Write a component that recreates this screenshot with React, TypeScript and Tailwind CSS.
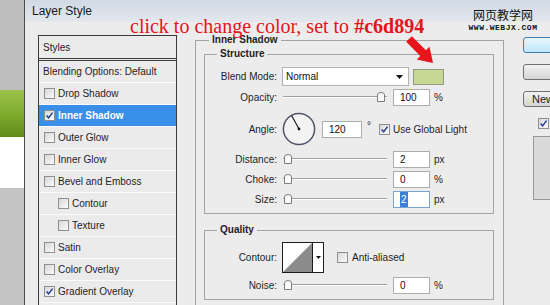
import clsx from 'clsx'

interface StyleRow {
  label: string
  checked?: boolean
  selected?: boolean
  indent?: boolean
}

const styleRows: StyleRow[] = [
  { label: 'Drop Shadow' },
  { label: 'Inner Shadow', checked: true, selected: true },
  { label: 'Outer Glow' },
  { label: 'Inner Glow' },
  { label: 'Bevel and Emboss' },
  { label: 'Contour', indent: true },
  { label: 'Texture', indent: true },
  { label: 'Satin' },
  { label: 'Color Overlay' },
  { label: 'Gradient Overlay', checked: true },
]

function CheckBox({ checked, className }: { checked?: boolean; className?: string }) {
  return (
    <span
      className={clsx(
        'flex h-[11px] w-[11px] shrink-0 items-center justify-center border border-[#8e8f8f] bg-gradient-to-br from-[#d8d8d8] to-[#fbfbfb]',
        className
      )}
    >
      {checked && (
        <svg viewBox="0 0 10 10" className="h-[9px] w-[9px]">
          <path d="M1.8 5 L4 7.6 L8.4 1.8" fill="none" stroke="#2a3c9c" strokeWidth="1.7" />
        </svg>
      )}
    </span>
  )
}

function Slider({ at }: { at: 'start' | 'end' }) {
  return (
    <div className="relative ml-[6px] flex h-full w-[104px] items-center">
      <div className="h-[2px] w-full border-t border-[#a0a0a0] bg-white" />
      {/* thumb */}
      <svg
        viewBox="0 0 8 10"
        className={clsx(
          'absolute top-1/2 h-[10px] w-[8px] -translate-y-1/2',
          at === 'start' ? 'left-[1px]' : 'right-[2px]'
        )}
      >
        <path d="M0.5 3 Q0.5 0.5 4 0.5 Q7.5 0.5 7.5 3 V9.5 H0.5 Z" fill="#fafafa" stroke="#7d7d7d" />
      </svg>
    </div>
  )
}

function Field({ value, selected, className }: { value: string; selected?: boolean; className?: string }) {
  return (
    <div
      className={clsx(
        'flex h-[17px] items-center border bg-white pl-[6px] text-[#111]',
        selected ? 'border-[#7ba2d0]' : 'border-[#abadb3]',
        className
      )}
    >
      <span className={clsx(selected && 'bg-[#3a7fd8] px-px text-white')}>{value}</span>
    </div>
  )
}

function Label({ text }: { text: string }) {
  return <div className="w-[72px] shrink-0 text-right">{text}</div>
}

function SliderRow({ label, value, unit, at, selected, className }: {
  label: string
  value: string
  unit: string
  at: 'start' | 'end'
  selected?: boolean
  className?: string
}) {
  return (
    <div className={clsx('flex h-[18px] items-center', className)}>
      <Label text={label} />
      <Slider at={at} />
      <Field value={value} selected={selected} className="ml-[6px] w-[37px]" />
      <span className="ml-[4px]">{unit}</span>
    </div>
  )
}

export default function App() {
  return (
    <div className="relative flex h-[305px] w-[550px] overflow-hidden bg-[#c2c2c2] font-['Liberation_Sans',Arial,sans-serif] text-[10px] text-[#1e1e1e]">
      {/* page behind the dialog */}
      <div className="flex w-[24px] shrink-0 flex-col">
        <div className="h-[90px] bg-[#bdbdbd]" />
        <div className="h-[47px] bg-gradient-to-b from-[#9cc34a] via-[#7eac2d] to-[#5f8d19]" />
        <div className="h-[51px] bg-white" />
        <div className="flex-1 bg-[#c5c5c5]" />
      </div>

      {/* dialog */}
      <div className="flex min-w-0 flex-1 flex-col border-l border-[#4b4b4b] bg-[#ececec]">
        <div className="flex h-[22px] shrink-0 items-center bg-gradient-to-b from-[#d0d9e5] to-[#e4e8ed] pl-[7px] text-[12px] text-[#1a1a1a]">
          Layer Style
        </div>

        <div className="flex flex-1">
          {/* Styles list */}
          <div className="ml-[13px] mt-[13px] flex w-[139px] shrink-0 flex-col border-x border-t border-[#3a3a3a] bg-[#ebebeb]">
            <div className="flex h-[22px] items-center pl-[4px]">Styles</div>
            <div className="border-t-[3px] border-double border-[#3a3a3a]" />
            <div className="flex h-[22px] items-center border-b border-[#fbfbfb] pl-[4px]">Blending Options: Default</div>
            {styleRows.map((row) => (
              <div
                key={row.label}
                className={clsx(
                  'flex h-[22px] shrink-0 items-center gap-[3px] border-b border-[#fbfbfb]',
                  row.indent ? 'pl-[19px]' : 'pl-[5px]',
                  row.selected && 'bg-[#3a8fe8] font-bold text-white'
                )}
              >
                <CheckBox checked={row.checked} />
                <span>{row.label}</span>
              </div>
            ))}
          </div>

          {/* Inner Shadow options */}
          <fieldset className="ml-[18px] mt-[11px] w-[309px] shrink-0 border border-[#a4a4a4] pb-[6px] pl-[8px] pr-[9px]">
            <legend className="ml-[5px] px-[3px] text-[10px] font-bold leading-[14px]">Inner Shadow</legend>

            <fieldset className="border border-[#a4a4a4] pb-[5px] pt-[6px]">
              <legend className="ml-[12px] px-[3px] font-bold leading-[14px]">Structure</legend>

              <div className="flex h-[19px] items-center">
                <Label text="Blend Mode:" />
                <div className="ml-[5px] flex h-[19px] w-[127px] items-center justify-between border border-[#b3b3b3] bg-white pl-[3px] pr-[5px] text-[#111]">
                  <span>Normal</span>
                  <svg viewBox="0 0 7 4" className="h-[4px] w-[7px]">
                    <path d="M0 0 H7 L3.5 4 Z" fill="#111" />
                  </svg>
                </div>
                <div className="ml-[4px] h-[16px] w-[31px] border border-[#8f9a80] bg-[#c6d894]" />
              </div>

              <SliderRow label="Opacity:" value="100" unit="%" at="end" className="mt-[2px]" />

              <div className="mt-[6px] flex h-[34px] items-center">
                <Label text="Angle:" />
                <svg viewBox="0 0 34 34" className="ml-[5px] h-[34px] w-[34px]">
                  <circle cx="17" cy="17" r="15.6" fill="#f3f3f3" stroke="#4f546a" strokeWidth="1.5" />
                  <line x1="17" y1="17" x2="9.6" y2="3.6" stroke="#111" strokeWidth="1.1" />
                  <circle cx="17" cy="17" r="1.4" fill="#111" />
                </svg>
                <Field value="120" className="ml-[6px] w-[40px]" />
                <span className="ml-[5px] -mt-[8px]">°</span>
                <CheckBox checked className="ml-[8px]" />
                <span className="ml-[3px]">Use Global Light</span>
              </div>

              <SliderRow label="Distance:" value="2" unit="px" at="start" className="mt-[4px]" />
              <SliderRow label="Choke:" value="0" unit="%" at="start" className="mt-[2px]" />
              <SliderRow label="Size:" value="2" unit="px" at="start" selected className="mt-[2px]" />
            </fieldset>

            <fieldset className="mt-[9px] border border-[#a4a4a4] pb-[5px] pt-[5px]">
              <legend className="ml-[12px] px-[3px] font-bold leading-[14px]">Quality</legend>

              <div className="flex h-[31px] items-center">
                <Label text="Contour:" />
                <div className="ml-[5px] flex h-[31px] w-[42px] border border-[#1c1c1c] bg-white">
                  <svg viewBox="0 0 29 29" className="h-[29px] w-[29px]">
                    <path d="M0 29 L29 0 V29 Z" fill="#8c8c8c" />
                  </svg>
                  <div className="flex flex-1 items-center justify-center border-l border-[#1c1c1c]">
                    <svg viewBox="0 0 5 3" className="h-[3px] w-[5px]">
                      <path d="M0 0 H5 L2.5 3 Z" fill="#111" />
                    </svg>
                  </div>
                </div>
                <CheckBox className="ml-[13px]" />
                <span className="ml-[4px]">Anti-aliased</span>
              </div>

              <SliderRow label="Noise:" value="0" unit="%" at="start" className="mt-[3px]" />
            </fieldset>
          </fieldset>

          {/* dialog buttons */}
          <div className="ml-[19px] flex w-[80px] shrink-0 flex-col pt-[15px]">
            <div className="h-[16px] rounded-[3px] border border-[#3c7fb1] bg-gradient-to-b from-[#eaf6fd] to-[#bee6fd]" />
            <div className="mt-[11px] h-[16px] rounded-[3px] border border-[#707070] bg-gradient-to-b from-[#f2f2f2] to-[#d4d4d4]" />
            <div className="mt-[11px] flex h-[16px] items-center rounded-[3px] border border-[#707070] bg-gradient-to-b from-[#f2f2f2] to-[#d4d4d4] pl-[8px] text-[11px]">
              New
            </div>
            <CheckBox checked className="ml-[15px] mt-[11px]" />
            <div className="ml-[10px] mt-[7px] h-[64px] w-[60px] border border-[#9a9a9a] bg-[#dadada]" />
          </div>
        </div>
      </div>

      {/* tutorial annotation */}
      <div className="absolute left-[130px] top-[16px] whitespace-nowrap font-['Liberation_Serif','Times_New_Roman',serif] text-[20px] leading-[20px] text-[#e3141b]">
        click to change color, set to <b>#c6d894</b>
      </div>
      <svg viewBox="400 30 40 40" className="absolute left-[400px] top-[30px] h-[40px] w-[40px]">
        <polygon
          points="411.8,36.2 425.9,50.3 429.5,46.7 433,63 416.7,59.5 420.3,55.9 406.2,41.8"
          fill="#e8131b"
        />
      </svg>

      {/* watermark */}
      <div className="absolute left-[466px] top-[9px] flex w-[74px] flex-col items-center whitespace-nowrap leading-none text-[#111]">
        <span className="font-['Noto_Sans_CJK_SC',sans-serif] text-[12px]">网页教学网</span>
        <span className="mt-[3px] font-['Liberation_Mono',monospace] text-[8px] font-bold tracking-[0.5px]">WWW.WEBJX.COM</span>
      </div>
    </div>
  )
}
